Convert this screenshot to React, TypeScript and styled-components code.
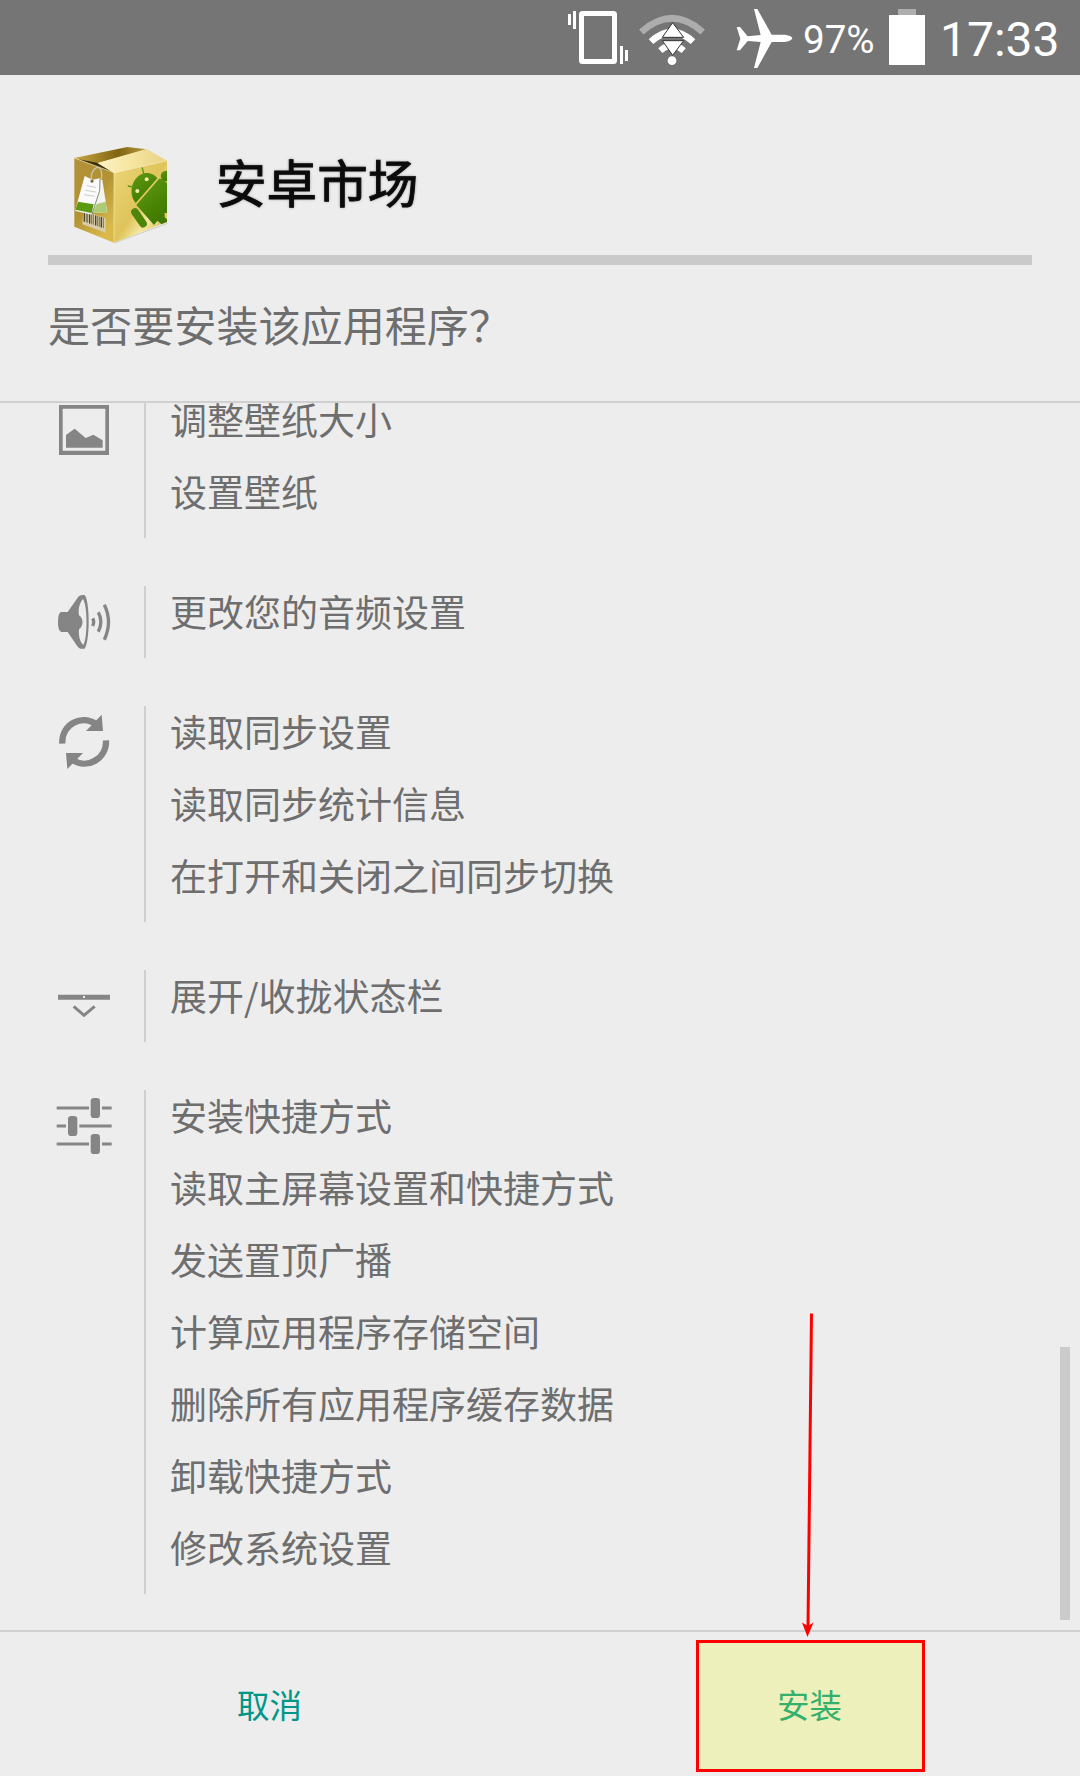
import React from 'react';
import styled, { createGlobalStyle } from 'styled-components';

const GlobalStyle = createGlobalStyle`
  body { margin: 0; background: #ededed; }
  * { box-sizing: border-box; }
`;

const Screen = styled.main`
  position: relative;
  display: flex;
  flex-direction: column;
  width: 1080px;
  height: 1776px;
  overflow: hidden;
  background: #ededed;
  color: #6e6e6e;
  font-family: 'Noto Sans CJK SC', 'Noto Sans', sans-serif;
`;

const StatusBar = styled.header`
  display: flex;
  align-items: flex-start;
  flex: none;
  height: 75px;
  padding-left: 567px;
  background: #757575;
  color: #fff;
  font-family: Roboto, sans-serif;
`;

const StatusIcon = styled.svg<{ $top: number; $left?: number }>`
  flex: none;
  margin: ${p => p.$top}px 0 0 ${p => p.$left ?? 0}px;
`;

const BatteryLevel = styled.span`
  flex: none;
  width: 96px;
  padding-left: 10px;
  font-size: 38.6px;
  line-height: 80px;
  white-space: nowrap;
`;

const Clock = styled.time`
  margin-left: 15px;
  font-size: 48px;
  line-height: 79px;
`;

const AppHeader = styled.section`
  display: flex;
  flex: none;
  height: 190px;
  margin: 0 48px;
  padding: 69px 0 0 24px;
  border-bottom: 10px solid #cacaca;
`;

const AppName = styled.h1`
  margin: 0 0 0 45px;
  font-size: 50.6px;
  line-height: 74px;
  font-weight: 400;
  color: #0b0b0b;
  -webkit-text-stroke: 0.9px #0b0b0b;
  text-shadow: 0 0 3px rgba(0, 0, 0, 0.5);
`;

const Question = styled.p`
  flex: none;
  height: 138px;
  margin: 0;
  padding-left: 48px;
  border-bottom: 2px solid #d0d0d0;
  font-size: 42.1px;
  line-height: 118px;
`;

const Viewport = styled.section`
  display: flex;
  flex: none;
  height: 1227px;
  overflow: hidden;
  justify-content: space-between;
`;

const Groups = styled.div`
  display: flex;
  flex-direction: column;
  gap: 48px;
  margin-top: -9px;
`;

const Group = styled.div`
  display: flex;
`;

const IconCell = styled.div`
  width: 144px;
  padding: 6px 0 0 54px;
  svg { display: block; }
`;

const Permissions = styled.ul`
  margin: 0;
  padding: 0 0 0 24px;
  border-left: 2px solid #d0d0d0;
  list-style: none;
`;

const Permission = styled.li`
  height: 72px;
  font-size: 37px;
  line-height: 50px;
  white-space: nowrap;
`;

const ScrollThumb = styled.div`
  flex: none;
  width: 10px;
  height: 273px;
  margin: 944px 10px 0 0;
  background: #cbcbcb;
`;

const Actions = styled.footer`
  display: flex;
  flex: none;
  height: 146px;
  border-top: 2px solid #d0d0d0;
`;

const ActionHalf = styled.div`
  display: flex;
  flex: 1;
  justify-content: center;
  padding: 8px 0 4px;
`;

const Action = styled.button<{ $marked?: boolean }>`
  width: 229px;
  height: 132px;
  padding: 0 1px 5px 0;
  border: 3px solid ${p => (p.$marked ? '#ff0000' : 'transparent')};
  background: ${p => (p.$marked ? '#eef0bc' : 'transparent')};
  color: ${p => (p.$marked ? '#34b06d' : '#009688')};
  font: 400 32.5px/120px 'Noto Sans CJK SC', sans-serif;
`;

const Arrow = styled.svg`
  position: absolute;
  left: 798px;
  top: 1310px;
`;

const Vibrate = () => (
  <StatusIcon $top={10} width="62" height="55" viewBox="81 30 186 165" fill="#fff">
    <path d="M84 42h9v33h-9zM99 33h9v54h-9zM240 138h9v54h-9zM255 150h9v33h-9z" />
    <rect x="124.500" y="40.500" width="99" height="144" rx="3" fill="none" stroke="#fff" strokeWidth="15" />
  </StatusIcon>
);

const Wifi = () => (
  <StatusIcon $top={14} $left={9} width="68" height="52" viewBox="294 42 204 156">
    <path d="M304 96Q396 14 488 96" fill="none" stroke="#adadad" strokeWidth="20" />
    <path d="M333 125Q396 67 459 125" fill="none" stroke="#fff" strokeWidth="20" />
    <path d="M361 152Q396 120 431 152" fill="none" stroke="#fff" strokeWidth="19" />
    <path d="M398 68L431 112H367ZM367 122H431L398 166Z" fill="#fff" stroke="#333" strokeWidth="3" />
    <path d="M371 117H428" stroke="#757575" strokeWidth="5" />
    <circle cx="396" cy="182" r="13" fill="#fff" />
  </StatusIcon>
);

const Plane = () => (
  <StatusIcon $top={8} $left={30} width="57" height="61" viewBox="588 24 171 183" fill="#fff">
    <path d="M642 27h10l43 77h40q22 4 22 11t-22 11h-40l-43 78h-10l20-78-39-3-23 28h-10l11-35-11-35h10l23 28 39-4z" />
  </StatusIcon>
);

const Battery = () => (
  <StatusIcon $top={9} width="36" height="56" viewBox="0 0 36 56">
    <path d="M9 0h18v6H9z" fill="#aeaeae" />
    <path d="M0 6h36v50H0z" fill="#fff" />
  </StatusIcon>
);

const MarketBox = () => (
  <svg width="99" height="102" viewBox="96 42 297 306">
    <defs>
      <linearGradient id="left" x1="0" y1="0" x2="0.6" y2="1">
        <stop offset="0" stopColor="#b2913a" />
        <stop offset="0.55" stopColor="#b39233" />
        <stop offset="1" stopColor="#d9b94a" />
      </linearGradient>
      <linearGradient id="right" x1="0" y1="0" x2="1" y2="1">
        <stop offset="0" stopColor="#ecd679" />
        <stop offset="0.5" stopColor="#dfc45b" />
        <stop offset="0.68" stopColor="#f5e89f" />
        <stop offset="1" stopColor="#c5a23c" />
      </linearGradient>
      <linearGradient id="flap" x1="0" y1="0" x2="1" y2="0">
        <stop offset="0" stopColor="#fdf3c5" />
        <stop offset="0.5" stopColor="#f5e5a0" />
        <stop offset="1" stopColor="#e9d283" />
      </linearGradient>
      <linearGradient id="top" x1="0" y1="0" x2="1" y2="0">
        <stop offset="0" stopColor="#c9a744" />
        <stop offset="0.6" stopColor="#806511" />
        <stop offset="1" stopColor="#b79a42" />
      </linearGradient>
      <linearGradient id="droid" x1="0" y1="0" x2="0.5" y2="1">
        <stop offset="0" stopColor="#5f9a12" />
        <stop offset="1" stopColor="#3f7a00" />
      </linearGradient>
      <clipPath id="side"><path d="M222 128L381 92V276L222 337Z" /></clipPath>
    </defs>
    <path d="M104 293L222 339L382 279V281L224 340Z" fill="#8f8f84" opacity="0.5" />
    <path d="M103 84L262 51L320 58L175 100L220 128Z" fill="url(#top)" />
    <path d="M112 87L175 99L220 128Z" fill="#3c2f0b" />
    <path d="M103 84L222 128V338L103 290Z" fill="url(#left)" />
    <path d="M222 128L381 92V276L222 338Z" fill="url(#right)" />
    <path d="M172 99L320 57L381 92L222 129Z" fill="url(#flap)" />
    <path d="M103 84L222 128V337M222 129L381 92" fill="none" stroke="#f6e9b0" strokeWidth="2" />
    <g clipPath="url(#side)" fill="url(#droid)">
      <path d="M287 219C262 187 278 138 313 130C328 126 345 134 352 145Z" />
      <path d="M311 132L307 114M282 172L265 168" fill="none" stroke="#5a9512" strokeWidth="4" strokeLinecap="round" />
      <path d="M289 225L355 149Q359 143 364 147L384 160V251L374 248V262L384 270V278L371 288L352 272L342 285Z" />
      <path d="M285 246L309 281" fill="none" stroke="#4d850b" strokeWidth="23" strokeLinecap="round" />
      <circle cx="378" cy="138" r="16" />
      <circle cx="292" cy="183" r="6" fill="#f4e9ae" />
      <circle cx="320" cy="148" r="6" fill="#f4e9ae" />
    </g>
    <path d="M130 244L197 264V308L127 283Z" fill="#d8cda8" />
    {[133, 139, 143, 149, 155, 160, 167, 173, 178, 184, 190].map((x, i) => (
      <path key={x} d={`M${x} ${246 + (x - 133) * 0.3}V${275 + (x - 133) * 0.34}`} stroke="#4b432b" strokeWidth={i % 3 ? 2 : 4} />
    ))}
    <path d="M166 148L187 149L202 247L158 249Z" fill="#f4f4ef" />
    <path d="M170 222L197 215L201 247L158 249Z" fill="#adca75" />
    <path d="M134 138L158 149L179 145L178 178L155 253L106 240Z" fill="#fafafa" />
    <path d="M114 215L161 223L154 253L106 240Z" fill="#5b9a10" />
    <path d="M106 239L155 249V254L106 243Z" fill="#eee" />
    <path d="M180 148L179 182L156 252" fill="none" stroke="#8a8b80" strokeWidth="3" />
    <path d="M140 167L168 172M136 181L167 186M133 194L163 199" stroke="#b5b5b5" strokeWidth="2" />
    <circle cx="156" cy="153" r="5" fill="#79632b" />
    <path d="M156 151C149 134 162 113 174 112C184 112 188 133 183 150" fill="none" stroke="#c9c3ae" strokeWidth="4" />
  </svg>
);

const Wallpaper = () => (
  <svg width="60" height="60" viewBox="162 60 180 180" fill="#858585">
    <path d="M177 75H327V225H177ZM188 86V212H316V86Z" fillRule="evenodd" />
    <path d="M198 165L224 146L257 174L280 164L308 181V203H198Z" />
  </svg>
);

const Speaker = () => (
  <svg width="60" height="60" viewBox="162 66 180 180" fill="#858585">
    <path d="M184 126H203L235 80Q239 75 247 75H254C270 94 270 215 254 236H241Q236 235 232 229L203 186H184Q174 184 174 156T184 126Z" />
    <path d="M249 87C233 105 235 132 238 137C251 144 251 168 237 178C235 200 241 218 250 225C263 205 263 108 249 87Z" fill="#ededed" />
    <path d="M278 145Q284 156 278 168M295 127Q310 156 295 185M313 104Q338 156 313 209" fill="none" stroke="#858585" strokeWidth="10" />
  </svg>
);

const Sync = () => (
  <svg width="60" height="60" viewBox="162 426 180 180">
    <path d="M187 521C184 460 248 433 289 463M318 511C321 567 259 600 218 569" fill="none" stroke="#858585" strokeWidth="19" />
    <path d="M305 434L309 483H258ZM198 549H249L202 597Z" fill="#858585" />
  </svg>
);

const Expand = () => (
  <svg width="60" height="60" viewBox="162 78 180 180">
    <path d="M174 134H330V149H174Z" fill="#858585" />
    <path d="M249 138h6v6h-6z" fill="#ededed" />
    <path d="M221 169L252 196L284 169" fill="none" stroke="#858585" strokeWidth="9" />
  </svg>
);

const Sliders = () => (
  <svg width="60" height="60" viewBox="162 438 180 180">
    <path d="M170 474H267M306 474H335M170 528H198M238 528H335M170 582H267M306 582H335" stroke="#858585" strokeWidth="9" />
    <g fill="#858585">
      <rect x="272" y="444" width="28" height="60" rx="10" />
      <rect x="204" y="498" width="28" height="60" rx="10" />
      <rect x="272" y="552" width="28" height="60" rx="10" />
    </g>
  </svg>
);

const groups = [
  { Icon: Wallpaper, items: ['调整壁纸大小', '设置壁纸'] },
  { Icon: Speaker, items: ['更改您的音频设置'] },
  { Icon: Sync, items: ['读取同步设置', '读取同步统计信息', '在打开和关闭之间同步切换'] },
  { Icon: Expand, items: ['展开/收拢状态栏'] },
  {
    Icon: Sliders,
    items: ['安装快捷方式', '读取主屏幕设置和快捷方式', '发送置顶广播', '计算应用程序存储空间', '删除所有应用程序缓存数据', '卸载快捷方式', '修改系统设置'],
  },
];

export default function App() {
  return (
    <Screen>
      <GlobalStyle />
      <StatusBar>
        <Vibrate />
        <Wifi />
        <Plane />
        <BatteryLevel>97%</BatteryLevel>
        <Battery />
        <Clock>17:33</Clock>
      </StatusBar>
      <AppHeader>
        <MarketBox />
        <AppName>安卓市场</AppName>
      </AppHeader>
      <Question>是否要安装该应用程序？</Question>
      <Viewport>
        <Groups>
          {groups.map(({ Icon, items }) => (
            <Group key={items[0]}>
              <IconCell><Icon /></IconCell>
              <Permissions>
                {items.map(item => <Permission key={item}>{item}</Permission>)}
              </Permissions>
            </Group>
          ))}
        </Groups>
        <ScrollThumb />
      </Viewport>
      <Actions>
        <ActionHalf><Action>取消</Action></ActionHalf>
        <ActionHalf><Action $marked>安装</Action></ActionHalf>
      </Actions>
      <Arrow width="24" height="330" viewBox="0 0 24 330">
        <path d="M13.500 3.500L10 318" stroke="#ff0000" strokeWidth="3" />
        <path d="M4 312.500L10 316L15.500 312.500L9.500 327Z" fill="#ff0000" />
      </Arrow>
    </Screen>
  );
}
